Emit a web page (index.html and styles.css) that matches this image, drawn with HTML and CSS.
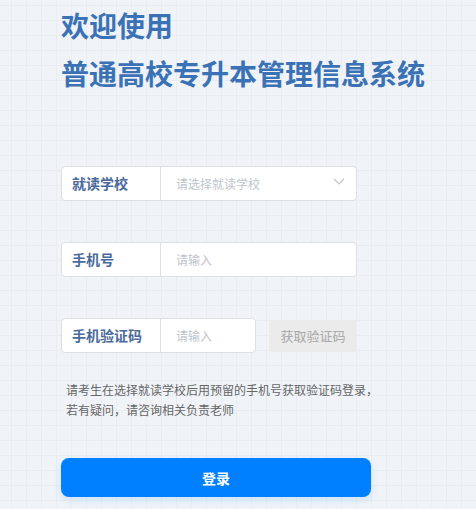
FILE: index.html
```html
<!DOCTYPE html>
<html lang="zh-CN">
<head>
    <meta charset="UTF-8">
    <meta name="viewport" content="width=device-width, initial-scale=1.0">
    <title>普通高校专升本管理信息系统</title>
    <link rel="stylesheet" href="styles.css">
</head>
<body>

    <div class="login-page">
        <h1 class="title">
            <span>欢迎使用</span>
            <span>普通高校专升本管理信息系统</span>
        </h1>

        <div class="form">
            <div class="field">
                <div class="field-label">就读学校</div>
                <div class="field-input select">
                    <span class="placeholder">请选择就读学校</span>
                    <svg class="arrow" width="12" height="7" viewBox="0 0 12 7">
                        <path d="M1 1 L6 6 L11 1" fill="none" stroke="#c0c4cc" stroke-width="1.2"/>
                    </svg>
                </div>
            </div>

            <div class="field">
                <div class="field-label">手机号</div>
                <div class="field-input">
                    <span class="placeholder">请输入</span>
                </div>
            </div>

            <div class="code-row">
                <div class="field code-field">
                    <div class="field-label">手机验证码</div>
                    <div class="field-input">
                        <span class="placeholder">请输入</span>
                    </div>
                </div>
                <button class="code-btn">获取验证码</button>
            </div>

            <p class="tip">请考生在选择就读学校后用预留的手机号获取验证码登录，<br>若有疑问，请咨询相关负责老师</p>

            <button class="login-btn">登录</button>
        </div>
    </div>

</body>
</html>
```

FILE: styles.css
```css
body {
    margin: 0;
    font-family: "Noto Sans CJK SC", "Noto Sans", sans-serif;
    background-color: #f0f4f8;
    background-image:
        linear-gradient(to right, #e9edf2 1px, transparent 1px),
        linear-gradient(to bottom, #e9edf2 1px, transparent 1px);
    background-size: 15px 15px;
    background-position: 11px 5px;
    min-height: 509px;
}

.login-page {
    padding: 1px 0 0 61px;
}

.title {
    margin: 0;
    font-size: 28px;
    line-height: 48px;
    font-weight: bold;
    color: #3b72b6;
}

.title span {
    display: block;
}

.form {
    margin-top: 69px;
    width: 310px;
}

.field {
    display: flex;
    width: 296px;
    height: 35px;
    box-sizing: border-box;
    border: 1px solid #dcdfe6;
    border-radius: 4px;
    background: white;
    margin-bottom: 41px;
}

.field-label {
    width: 99px;
    flex-shrink: 0;
    border-right: 1px solid #dcdfe6;
    padding-left: 10px;
    box-sizing: border-box;
    font-size: 14px;
    font-weight: bold;
    color: #4b6a9b;
    line-height: 33px;
}

.field-input {
    flex: 1;
    display: flex;
    align-items: center;
    justify-content: space-between;
    padding: 0 11px 0 15px;
}

.placeholder {
    font-size: 12px;
    color: #c0c4cc;
}

.arrow {
    margin-top: -4px;
}

.code-row {
    display: flex;
    align-items: center;
    gap: 13px;
    margin-bottom: 41px;
}

.code-field {
    width: 195px;
    margin-bottom: 0;
}

.code-btn {
    width: 88px;
    height: 32px;
    border: none;
    border-radius: 3px;
    background: #ebebeb;
    color: #a8a8a8;
    font-family: inherit;
    font-size: 13px;
    padding: 0;
}

.tip {
    margin: -14px 0 0 5px;
    white-space: nowrap;
    font-size: 12px;
    line-height: 20px;
    color: #666;
}

.login-btn {
    display: block;
    margin-top: 38px;
    width: 310px;
    height: 39px;
    border: none;
    border-radius: 8px;
    background: #0080ff;
    color: white;
    font-family: inherit;
    font-size: 14px;
    font-weight: bold;
    box-shadow: 0 3px 8px rgba(0, 128, 255, 0.15);
}
```
